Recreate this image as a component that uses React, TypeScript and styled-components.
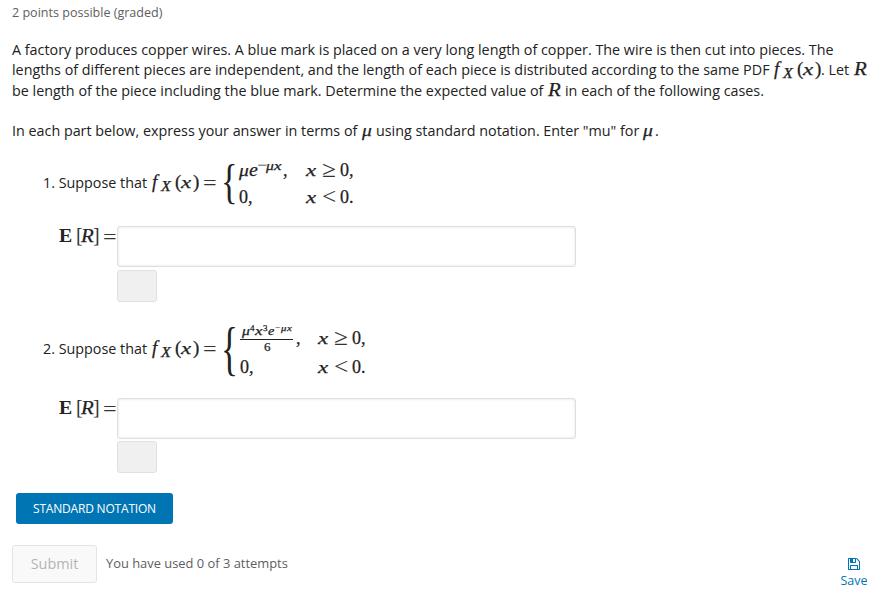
import React from 'react';
import styled, { createGlobalStyle } from 'styled-components';

const GlobalStyle = createGlobalStyle`
  * { box-sizing: border-box; }
  body { margin: 0; background: #fff; }
`;

const Page = styled.main`
  width: 883px;
  height: 594px;
  overflow: hidden;
  display: flex;
  flex-direction: column;
  padding-left: 12px;
  font-family: 'Open Sans', sans-serif;
  font-size: 14.33px;
  color: #222;
`;

const Progress = styled.div`
  height: 40px;
  padding-top: 3px;
  font-size: 12.55px;
  line-height: 19px;
  color: #5e5e5e;
`;

const Line = styled.div<{ $h: number; $gap?: number }>`
  height: ${p => p.$h}px;
  line-height: ${p => p.$h}px;
  margin-top: ${p => p.$gap ?? 0}px;
  white-space: nowrap;
`;

const Words = styled.span<{ $w: number }>`
  display: inline-block;
  width: ${p => p.$w}px;
  line-height: 0;
  white-space: pre;
`;

type SymProps = { $w: number; $size?: number; $up?: number; $plain?: boolean; $bold?: boolean; $stretch?: number; $gap?: number };

const Sym = styled.span<SymProps>`
  display: inline-block;
  width: ${p => p.$w}px;
  margin-left: ${p => p.$gap ?? 0}px;
  line-height: 0;
  vertical-align: ${p => p.$up ?? 0}px;
  font-family: 'Liberation Serif', serif;
  font-size: ${p => p.$size ?? 18}px;
  font-style: ${p => (p.$plain ? 'normal' : 'italic')};
  font-weight: ${p => (p.$bold ? 700 : 400)};
  -webkit-text-stroke: ${p => (p.$bold ? 0 : 0.25)}px currentColor;
  transform: scaleX(${p => p.$stretch ?? 1});
  transform-origin: left;
`;

const Operator = styled(Sym)`
  -webkit-text-stroke: 0;
  color: #333;
`;

const Equation = styled.div<{ $h: number; $gap: number }>`
  display: flex;
  align-items: flex-start;
  height: ${p => p.$h}px;
  margin-top: ${p => p.$gap}px;
  padding-left: 31px;
`;

const Brace = styled.span<{ $h: number; $size: number; $squeeze: number; $w?: number }>`
  width: ${p => p.$w ?? 18}px;
  margin-left: 1px;
  height: ${p => p.$h}px;
  line-height: ${p => p.$h}px;
  font-family: 'Liberation Serif', serif;
  font-size: ${p => p.$size}px;
  transform: scaleX(${p => p.$squeeze});
  transform-origin: left;
`;

const Cases = styled.div`
  display: flex;
  flex-direction: column;
`;

const Fraction = styled.span`
  display: inline-flex;
  flex-direction: column;
  width: 53px;
  margin: 0 3px 0 0;
  vertical-align: 9px;
`;

const Numerator = styled.span`
  height: 14px;
  line-height: 8px;
  padding-left: 2px;
  border-bottom: 1px solid #222;
`;

const Denominator = styled.span`
  height: 12px;
  line-height: 11px;
  padding-left: 24px;
`;

const Answer = styled.div<{ $gap: number }>`
  display: flex;
  margin-top: ${p => p.$gap}px;
  padding-left: 47px;
`;

const AnswerLabel = styled.div`
  width: 58px;
  height: 22px;
  line-height: 22px;
  white-space: nowrap;
`;

const Field = styled.div<{ $gap: number }>`
  display: flex;
  flex-direction: column;
  gap: ${p => p.$gap}px;
`;

const Input = styled.input`
  width: 459px;
  height: 41px;
  border: 1px solid #dedede;
  border-radius: 3px;
  box-shadow: inset 0 0 3px rgba(0, 0, 0, 0.12);
  outline: none;
`;

const Preview = styled.div`
  width: 40px;
  height: 32px;
  background: #f0f0f0;
  border: 1px solid #e0e0e0;
  border-radius: 3px;
`;

const NotationButton = styled.button`
  width: 157px;
  height: 31px;
  margin: 20px 0 0 4px;
  padding: 0;
  border: 0;
  border-radius: 3px;
  background: #0075b4;
  color: #fff;
  font: 12px/31px 'Open Sans', sans-serif;
  letter-spacing: -0.2px;
`;

const Footer = styled.footer`
  display: flex;
  align-items: flex-start;
  margin-top: 21px;
  height: 49px;
`;

const SubmitButton = styled.button`
  width: 85px;
  height: 38px;
  padding: 0;
  border: 1px solid #e4e4e4;
  border-radius: 3px;
  background: #f9f9f9;
  color: #b4b4b4;
  font: 14.4px/36px 'Open Sans', sans-serif;
`;

const Attempts = styled.div`
  margin-left: 9px;
  line-height: 37px;
  font-size: 12.9px;
  color: #5e5e5e;
`;

const SaveButton = styled.button`
  display: flex;
  flex-direction: column;
  align-items: center;
  gap: 2px;
  width: 40px;
  margin: 13px 9px 0 auto;
  padding: 0;
  border: 0;
  background: none;
  color: #0075b4;
  font: 12.5px/18px 'Open Sans', sans-serif;
`;

const FloppyIcon = () => (
  <svg width="12" height="12" viewBox="0 128 1536 1536" fill="currentColor">
    <path d="M384 1536h768v-384h-768v384zM1280 1536h128v-896q0-14-10-38.5t-20-34.5l-281-281q-10-10-34-20t-39-10v416q0 40-28 68t-68 28h-576q-40 0-68-28t-28-68v-416h-128v1280h128v-416q0-40 28-68t68-28h832q40 0 68 28t28 68v416zM896 608v-320q0-13-9.5-22.5t-22.5-9.5h-192q-13 0-22.5 9.5t-9.5 22.5v320q0 13 9.5 22.5t22.5 9.5h192q13 0 22.5-9.5t9.5-22.5zM1536 640v928q0 40-28 68t-68 28h-1344q-40 0-68-28t-28-68v-1344q0-40 28-68t68-28h928q40 0 88 20t76 48l280 280q28 28 48 76t20 88z" />
  </svg>
);

/* The density f_X(x), 47px wide. */
const Density = () => (
  <>
    <Sym $w={9} $size={19}>f</Sym>
    <Sym $w={14} $size={14} $up={-3} $stretch={1.15}>X</Sym>
    <Sym $w={6} $plain $size={19}>(</Sym>
    <Sym $w={12} $size={17} $stretch={1.35}>x</Sym>
    <Sym $w={6} $plain $size={19}>)</Sym>
  </>
);

const Lead = ({ n, h }: { n: number; h: number }) => (
  <Line $h={h}>
    <Words $w={109}>{n}. Suppose that</Words>
    <Density />
    <Operator $gap={4} $w={17} $plain $size={22} $up={-2} $stretch={1.1}>=</Operator>
  </Line>
);

const Condition = ({ op, end, up = 0 }: { op: string; end: string; up?: number }) => (
  <>
    <Sym $w={16} $size={17} $up={up} $stretch={1.35}>x</Sym>
    <Operator $w={18} $plain $size={23} $up={up - 1} $stretch={1.1}>{op}</Operator>
    <Sym $w={9} $plain $up={up}>0</Sym>
    <Sym $w={5} $plain $up={up}>{end}</Sym>
  </>
);

const ExpectedValue = ({ gap, fieldGap }: { gap: number; fieldGap: number }) => (
  <Answer $gap={gap}>
    <AnswerLabel>
      <Sym $w={17} $plain $bold $size={18} $stretch={1.1}>E</Sym>
      <Operator $w={5} $plain $size={20}>[</Operator>
      <Sym $w={12} $size={19} $stretch={1.1}>R</Sym>
      <Operator $w={10} $plain $size={20}>]</Operator>
      <Operator $w={14} $plain $size={22} $up={-2} $stretch={1.1}>=</Operator>
    </AnswerLabel>
    <Field $gap={fieldGap}>
      <Input aria-label="Expected value" />
      <Preview />
    </Field>
  </Answer>
);

export default function App() {
  return (
    <Page>
      <GlobalStyle />
      <Progress>2 points possible (graded)</Progress>
      <Line $h={20}>
        <Words $w={822}>A factory produces copper wires. A blue mark is placed on a very long length of copper. The wire is then cut into pieces. The</Words>
      </Line>
      <Line $h={20}>
        <Words $w={762}>lengths of different pieces are independent, and the length of each piece is distributed according to the same PDF</Words>
        <Density />
        <Words $w={33}>. Let</Words>
        <Sym $w={14} $size={19} $stretch={1.1}>R</Sym>
      </Line>
      <Line $h={21}>
        <Words $w={536}>be length of the piece including the blue mark. Determine the expected value of</Words>
        <Sym $w={17} $size={19} $stretch={1.1}>R</Sym>
        <Words $w={210}>in each of the following cases.</Words>
      </Line>
      <Line $h={20} $gap={20}>
        <Words $w={350}>In each part below, express your answer in terms of</Words>
        <Sym $w={14} $size={17} $stretch={1.15}>μ</Sym>
        <Words $w={267}>using standard notation. Enter "mu" for</Words>
        <Sym $w={12} $size={17} $stretch={1.15}>μ</Sym>
        <Words $w={5}>.</Words>
      </Line>

      <Equation $h={52} $gap={17}>
        <Lead n={1} h={49} />
        <Brace $h={48} $size={49} $squeeze={0.7}>{'{'}</Brace>
        <Cases>
          <Line $h={26}>
            <Sym $w={10} $size={17} $stretch={1.15}>μ</Sym>
            <Sym $w={8} $stretch={1.1}>e</Sym>
            <Operator $w={9} $plain $size={15} $up={6} $stretch={1.2}>−</Operator>
            <Sym $w={8} $size={12} $up={6} $stretch={1.3}>μ</Sym>
            <Sym $w={9} $size={12} $up={6} $stretch={1.4}>x</Sym>
            <Sym $w={23} $plain>,</Sym>
            <Condition op="≥" end="," />
          </Line>
          <Line $h={26}>
            <Sym $w={9} $plain $up={-1}>0</Sym>
            <Sym $w={58} $plain $up={-1}>,</Sym>
            <Condition op="<" end="." up={-1} />
          </Line>
        </Cases>
      </Equation>
      <ExpectedValue gap={16} fieldGap={3} />

      <Equation $h={56} $gap={23}>
        <Lead n={2} h={47} />
        <Brace $h={46} $size={59} $squeeze={0.6} $w={19}>{'{'}</Brace>
        <Cases>
          <Line $h={28}>
            <Fraction>
              <Numerator>
                <Sym $w={8} $size={12} $stretch={1.3}>μ</Sym>
                <Sym $w={5} $plain $size={9} $up={4}>4</Sym>
                <Sym $w={8} $size={12} $stretch={1.4}>x</Sym>
                <Sym $w={5} $plain $size={9} $up={4}>3</Sym>
                <Sym $w={7} $size={13} $stretch={1.1}>e</Sym>
                <Operator $w={6} $plain $size={10} $up={4}>−</Operator>
                <Sym $w={6} $size={9} $up={4} $stretch={1.2}>μ</Sym>
                <Sym $w={5} $size={9} $up={4} $stretch={1.2}>x</Sym>
              </Numerator>
              <Denominator>
                <Sym $w={7} $plain $size={13}>6</Sym>
              </Denominator>
            </Fraction>
            <Sym $w={22} $plain>,</Sym>
            <Condition op="≥" end="," />
          </Line>
          <Line $h={28}>
            <Sym $w={9} $plain $up={-1}>0</Sym>
            <Sym $w={69} $plain $up={-1}>,</Sym>
            <Condition op="<" end="." up={-1} />
          </Line>
        </Cases>
      </Equation>
      <ExpectedValue gap={17} fieldGap={2} />

      <NotationButton>STANDARD NOTATION</NotationButton>
      <Footer>
        <SubmitButton disabled>Submit</SubmitButton>
        <Attempts>You have used 0 of 3 attempts</Attempts>
        <SaveButton>
          <FloppyIcon />
          Save
        </SaveButton>
      </Footer>
    </Page>
  );
}
